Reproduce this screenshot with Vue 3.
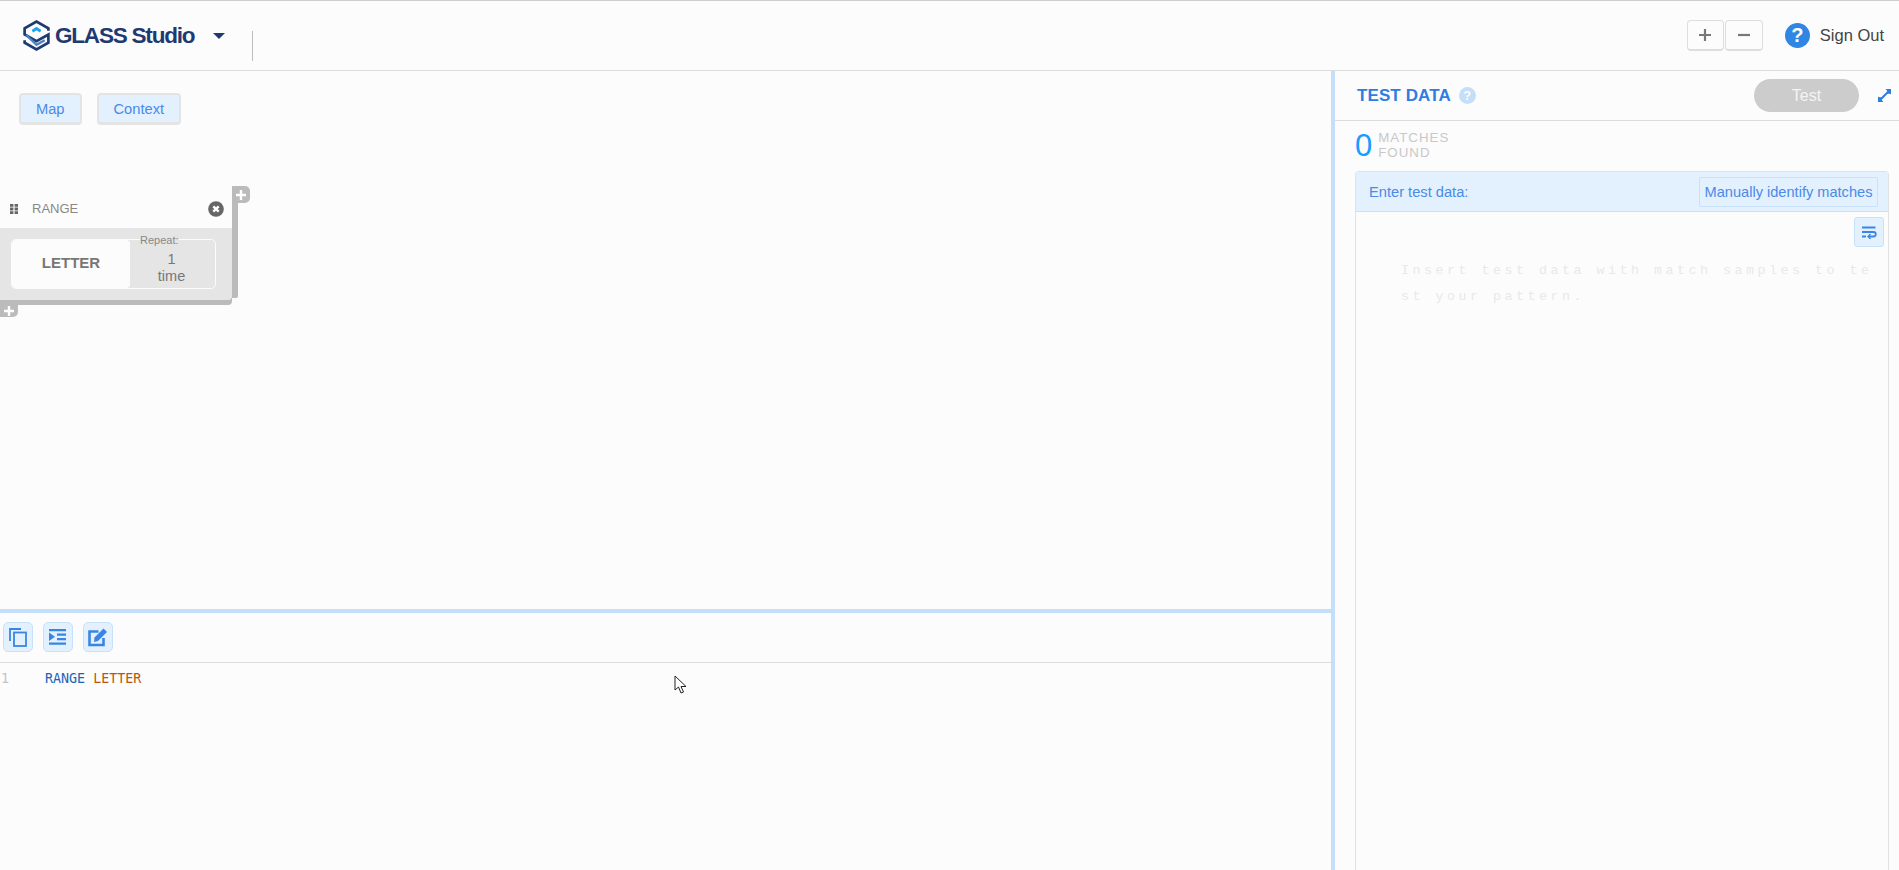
<script setup>
const tools = ['copy', 'indent', 'edit']
</script>

<template>
  <div class="app">
    <header class="topbar">
      <div class="brand">
        <svg class="logo" viewBox="0 0 26 30" width="27" height="31" fill="none">
          <path d="M24.500 10.500V8L13 1.500 1.500 8v6l11.500 6.500 11.500-6.500v8L13 28.500 1.500 22v-2.500" stroke="#1e3a70" stroke-width="2.600"/>
          <path d="M9 10.800 13 8.300l4 2.500" stroke="#1aa5f0" stroke-width="2.800"/>
          <path d="M3 14.500 13 24l8-4.500" stroke="#4a83c4" stroke-width="2.200"/>
        </svg>
        <span class="brand-name">GLASS Studio</span>
        <span class="caret"></span>
        <span class="vdiv"></span>
      </div>
      <div class="top-right">
        <button class="zoom-btn">
          <svg viewBox="0 0 14 14" width="14" height="14"><path d="M7 1v12M1 7h12" stroke="#777" stroke-width="2.200"/></svg>
        </button>
        <button class="zoom-btn minus">
          <svg viewBox="0 0 14 14" width="14" height="14"><path d="M1 7h12" stroke="#777" stroke-width="2.200"/></svg>
        </button>
        <span class="help">?</span>
        <span class="signout">Sign Out</span>
      </div>
    </header>

    <div class="workspace">
      <section class="left">
        <div class="canvas">
          <div class="tabs">
            <button class="tab">Map</button>
            <button class="tab">Context</button>
          </div>
          <div class="node">
            <div class="node-head">
              <svg class="grip" viewBox="0 0 8 10" width="8" height="10"><path d="M0 0h3.400v2.800H0zM4.600 0H8v2.800H4.600zM0 3.600h3.400v2.800H0zM4.600 3.600H8v2.800H4.600zM0 7.200h3.400V10H0zM4.600 7.200H8V10H4.600z" fill="#666"/></svg>
              <span class="node-title">RANGE</span>
              <svg class="close" viewBox="0 0 16 16" width="16" height="16"><circle cx="8" cy="8" r="7.800" fill="#666"/><path d="m5.300 5.300 5.400 5.400m0-5.400-5.400 5.400" stroke="#fff" stroke-width="2.400"/></svg>
            </div>
            <div class="node-body">
              <div class="inner">
                <div class="letter">LETTER</div>
                <div class="repeat">
                  <span class="repeat-label">Repeat:</span>
                  <span class="repeat-val">1<br>time</span>
                </div>
              </div>
            </div>
            <span class="plus plus-top">
              <svg viewBox="0 0 10 10" width="10" height="10"><path d="M5 0v10M0 5h10" stroke="#fff" stroke-width="2.400"/></svg>
            </span>
            <span class="plus plus-bottom">
              <svg viewBox="0 0 10 10" width="10" height="10"><path d="M5 0v10M0 5h10" stroke="#fff" stroke-width="2.400"/></svg>
            </span>
          </div>
        </div>
        <div class="hsplit"></div>
        <div class="editor">
          <div class="tools">
            <button v-for="t in tools" :key="t" class="tool">
              <svg v-if="t === 'copy'" viewBox="0 0 20 20" width="20" height="20" fill="none" stroke="#3a85e3" stroke-width="1.800"><path d="M2 14V2h11"/><rect x="6" y="5.500" width="12" height="13.500"/></svg>
              <svg v-else-if="t === 'indent'" viewBox="0 0 20 20" width="20" height="20" fill="#3a85e3"><path d="M1 2h17v2.200H1zM9 6.500h9v2.200H9zM9 11h9v2.200H9zM1 15.500h17v2.200H1zM1 5.500l6 4.300-6 4.200z"/></svg>
              <svg v-else viewBox="0 0 22 22" width="22" height="22" fill="none"><path d="M16.500 12v7H2.500V5.500h9" stroke="#3a85e3" stroke-width="2.600"/><path d="M7.500 11.500 16.500 2.500l3.500 3.500-9 9-4 1z" fill="#3a85e3"/></svg>
            </button>
          </div>
          <div class="code">
            <span class="gutter">1</span>
            <span class="kw">RANGE</span>&nbsp;<span class="val">LETTER</span>
          </div>
          <svg class="cursor" viewBox="0 0 14 20" width="14" height="20"><path d="M1 1v14l3.500-3 2.500 6 2.500-1-2.500-5.500H12z" fill="#fff" stroke="#222" stroke-width="1"/></svg>
        </div>
      </section>

      <div class="vsplit"></div>

      <aside class="right">
        <div class="test-head">
          <span class="test-title">TEST DATA</span>
          <span class="mini-help">?</span>
          <button class="test-btn">Test</button>
          <svg class="expand" viewBox="0 0 14 14" width="13" height="13" fill="#2f7de1"><path d="M8 0h6v6zM0 14V8l6 6z"/><path d="M3 11 11 3" stroke="#2f7de1" stroke-width="2.200"/><path d="M10 1h4v4h-4zM0 9h4v4H0z"/></svg>
        </div>
        <div class="matches">
          <span class="count">0</span>
          <span class="count-label">MATCHES<br>FOUND</span>
        </div>
        <div class="box">
          <div class="box-head">
            <span>Enter test data:</span>
            <button class="manual">Manually identify matches</button>
          </div>
          <div class="box-body">
            <button class="wrap">
              <svg viewBox="0 0 16 14" width="16" height="14" fill="none" stroke="#3a85e3" stroke-width="1.800"><path d="M1 2.500h13.500M1 7h11.500a2 2 0 0 1 0 4.500H8M1 11.500h4"/><path d="M9.500 9 7 11.500 9.500 14" stroke-width="1.400"/></svg>
            </button>
            <p class="placeholder">Insert test data with match samples to te<br>st your pattern.</p>
          </div>
        </div>
      </aside>
    </div>
  </div>
</template>

<style>
html, body { margin: 0; background: #fcfcfc; overflow: hidden; }
</style>

<style scoped>
.app {
  width: 1899px;
  height: 870px;
  display: flex;
  flex-direction: column;
  overflow: hidden;
  background: #fcfcfc;
  font-family: "Liberation Sans", Arial, sans-serif;
  color: #666;
}
button { font-family: inherit; padding: 0; cursor: pointer; }

.topbar {
  height: 71px;
  flex: none;
  box-sizing: border-box;
  border-top: 1px solid #cfcfcf;
  border-bottom: 1px solid #dcdcdc;
  display: flex;
  justify-content: space-between;
  align-items: center;
}
.brand { display: flex; align-items: center; padding-left: 23px; }
.logo { flex: none; }
.brand-name {
  margin-left: 5px;
  font-size: 22.500px;
  font-weight: 700;
  letter-spacing: -1.200px;
  color: #1e3a70;
  white-space: nowrap;
}
.caret {
  margin-left: 19px;
  border-left: 6px solid transparent;
  border-right: 6px solid transparent;
  border-top: 6px solid #1e3a70;
}
.vdiv {
  width: 1px;
  height: 30px;
  margin: 10px 0 -10px 27px;
  background: #bdbdbd;
}
.top-right { display: flex; align-items: center; padding-right: 15px; }
.zoom-btn {
  width: 37px;
  height: 31px;
  box-sizing: border-box;
  background: #fcfcfc;
  border: 1px solid #dedede;
  border-bottom-width: 2px;
  border-radius: 4px;
  display: flex;
  align-items: center;
  justify-content: center;
}
.minus { margin-left: 1px; width: 38px; }
.help {
  width: 25px;
  height: 25px;
  margin-left: 22px;
  border-radius: 50%;
  background: #2f86e3;
  color: #fff;
  font-size: 20px;
  font-weight: 700;
  line-height: 25px;
  text-align: center;
}
.signout { margin-left: 10px; font-size: 16.500px; color: #444; }

.workspace { flex: 1; display: flex; min-height: 0; }
.left { width: 1331px; flex: none; display: flex; flex-direction: column; }
.canvas { height: 538px; flex: none; position: relative; overflow: hidden; }
.tabs { display: flex; gap: 15px; padding: 22px 0 0 19px; }
.tab {
  height: 32px;
  box-sizing: border-box;
  padding: 0 15px;
  background: #e3f0fe;
  border: 2px solid #e4e4e4;
  border-bottom-width: 3px;
  border-radius: 4px;
  color: #4a8ae8;
  font-size: 14.670px;
}
.node {
  position: absolute;
  left: -4px;
  top: 115px;
  width: 236px;
  height: 114px;
  border-radius: 0 0 4px 4px;
  box-shadow: 8px 0 0 -2px #bbb, 0 5px 0 #bbb;
  background: #e5e5e5;
}
.node-head {
  height: 42px;
  box-sizing: border-box;
  background: #fcfcfc;
  display: flex;
  align-items: center;
  padding: 3px 8px 0 14px;
}
.grip { flex: none; }
.node-title { margin-left: 14px; font-size: 13px; color: #888; }
.close { margin-left: auto; }
.node-body { padding: 11px 15px 0; }
.inner {
  height: 50px;
  width: 205px;
  box-sizing: border-box;
  border: 1px solid #fcfcfc;
  border-radius: 5px;
  display: flex;
}
.letter {
  width: 118px;
  background: #fcfcfc;
  border-radius: 4px;
  font-size: 15px;
  font-weight: 700;
  line-height: 46px;
  text-align: center;
  color: #777;
}
.repeat { flex: 1; position: relative; text-align: center; }
.repeat-label {
  position: absolute;
  left: 10px;
  top: -6px;
  font-size: 11px;
  color: #888;
  background: #e5e5e5;
}
.repeat-val {
  display: block;
  padding-top: 11px;
  margin-left: -2px;
  font-size: 14.500px;
  line-height: 17px;
  color: #777;
}
.plus {
  position: absolute;
  background: #bbb;
  display: flex;
  align-items: center;
  justify-content: center;
}
.plus-top { left: 236px; top: 0; width: 18px; height: 17px; border-radius: 0 5px 5px 0; }
.plus-bottom { left: 4px; top: 119px; width: 18px; height: 12px; border-radius: 0 0 5px 0; }

.hsplit { height: 4px; flex: none; background: #c4dffa; }
.editor { flex: 1; position: relative; }
.tools {
  height: 50px;
  box-sizing: border-box;
  border-bottom: 1px solid #dcdcdc;
  display: flex;
  gap: 10px;
  padding: 9px 0 0 3px;
}
.tool {
  width: 30px;
  height: 30px;
  box-sizing: border-box;
  background: #e3f0fe;
  border: 1px solid #c8e1fb;
  border-radius: 5px;
  display: flex;
  align-items: center;
  justify-content: center;
}
.code {
  display: flex;
  padding-top: 7px;
  font-family: "DejaVu Sans Mono", monospace;
  font-size: 13.330px;
  line-height: 18px;
}
.gutter { width: 45px; padding-left: 1px; box-sizing: border-box; color: #c4c4c4; }
.kw { color: #1b64b8; }
.val { color: #b8560e; }
.cursor { position: absolute; left: 674px; top: 62px; }

.vsplit { width: 4px; flex: none; background: #c4dffa; }
.right { flex: 1; display: flex; flex-direction: column; min-width: 0; }
.test-head {
  height: 50px;
  flex: none;
  box-sizing: border-box;
  border-bottom: 1px solid #dcdcdc;
  display: flex;
  align-items: center;
  padding: 0 8px 0 22px;
}
.test-title { font-size: 17px; font-weight: 700; letter-spacing: 0.100px; color: #2f7de1; }
.mini-help {
  width: 17px;
  height: 17px;
  margin-left: 8px;
  border-radius: 50%;
  background: #c4dffa;
  color: #fcfcfc;
  font-size: 13px;
  font-weight: 700;
  line-height: 17px;
  text-align: center;
}
.test-btn {
  width: 105px;
  height: 33px;
  margin-left: auto;
  border: none;
  border-radius: 17px;
  background: #cccccc;
  color: #f4f4f4;
  font-size: 16px;
}
.expand { margin-left: 19px; }
.matches { height: 50px; flex: none; display: flex; align-items: center; padding: 0 0 0 20px; box-sizing: border-box; }
.count { font-size: 31px; color: #1a9bff; line-height: 34px; }
.count-label {
  margin: -2px 0 0 6px;
  font-size: 13.300px;
  line-height: 15px;
  letter-spacing: 1px;
  color: #c8c8c8;
}
.box {
  flex: 1;
  margin: 0 10px 0 20px;
  box-sizing: border-box;
  border: 1px solid #e2e2e2;
  border-bottom: none;
  border-radius: 4px 4px 0 0;
  display: flex;
  flex-direction: column;
}
.box-head {
  height: 40px;
  flex: none;
  box-sizing: border-box;
  background: #e3f0fe;
  border-bottom: 1px solid #c8e1fb;
  display: flex;
  align-items: center;
  justify-content: space-between;
  padding: 0 10px 0 13px;
  font-size: 14.670px;
  color: #4a8ae8;
}
.manual {
  height: 30px;
  width: 179px;
  box-sizing: border-box;
  background: #e3f0fe;
  border: 1px solid #c8e1fb;
  border-radius: 2px;
  color: #4a8ae8;
  font-size: 14.600px;
  white-space: nowrap;
}
.box-body { flex: 1; position: relative; }
.wrap {
  position: absolute;
  right: 4px;
  top: 5px;
  width: 30px;
  height: 30px;
  box-sizing: border-box;
  background: #e3f0fe;
  border: 1px solid #c8e1fb;
  border-radius: 3px;
  display: flex;
  align-items: center;
  justify-content: center;
}
.placeholder {
  margin: 0;
  padding: 46px 0 0 45px;
  font-family: "Liberation Mono", monospace;
  font-size: 13.330px;
  line-height: 25.500px;
  letter-spacing: 3.500px;
  color: #e9e9e9;
  white-space: nowrap;
}
</style>
